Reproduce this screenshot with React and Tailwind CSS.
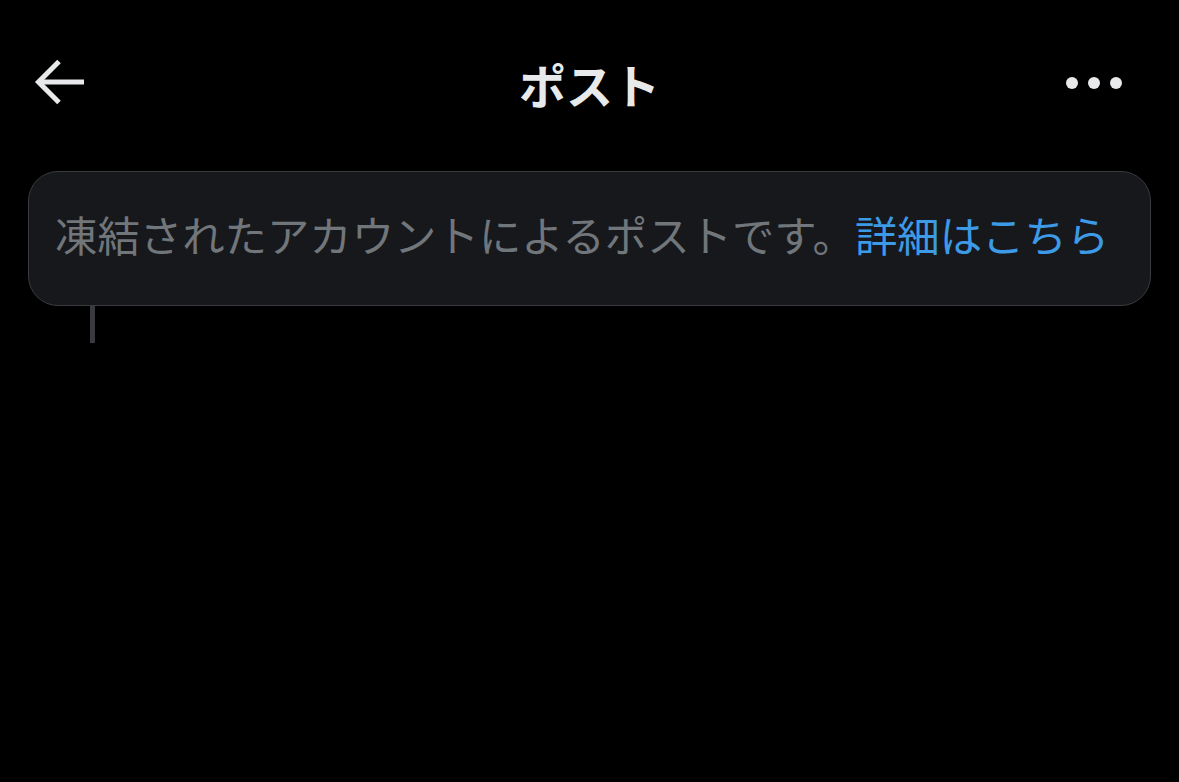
import React from 'react';

const font = { fontFamily: '"Noto Sans CJK JP", "Noto Sans", sans-serif' };

function BackArrow() {
  return (
    <svg width="52" height="48" viewBox="0 0 52 48" fill="none" stroke="#e7e9ea" strokeWidth="5">
      <path d="M50 23H5" />
      <path d="M25 2.5L4.5 23L25 43.5" />
    </svg>
  );
}

function MoreDots() {
  return (
    <div className="flex items-center gap-[10px] mr-[23px]">
      <span className="block w-[12px] h-[12px] rounded-full bg-[#e7e9ea]" />
      <span className="block w-[12px] h-[12px] rounded-full bg-[#e7e9ea]" />
      <span className="block w-[12px] h-[12px] rounded-full bg-[#e7e9ea]" />
    </div>
  );
}

export default function App() {
  return (
    <div className="w-[1179px] h-[782px] bg-black overflow-hidden" style={font}>
      <header className="grid grid-cols-3 items-center h-[48px] mt-[59px] px-[34px]">
        <div className="flex">
          <BackArrow />
        </div>
        <h1 className="text-center text-[47px] leading-none font-bold text-[#e7e9ea]">ポスト</h1>
        <div className="flex justify-end">
          <MoreDots />
        </div>
      </header>

      <div className="mx-[28px] mt-[64px] h-[135px] flex items-center px-[26px] pb-[9px] bg-[#17181c] border border-[#3a3b3f] rounded-[30px]">
        <p className="text-[42.4px] leading-none text-[#71767b] whitespace-nowrap">
          凍結されたアカウントによるポストです。
          <span className="text-[#3c9ae6]">詳細はこちら</span>
        </p>
      </div>

      <div className="ml-[90px] w-[5px] h-[37px] bg-[#3a3b3f]" />
    </div>
  );
}
